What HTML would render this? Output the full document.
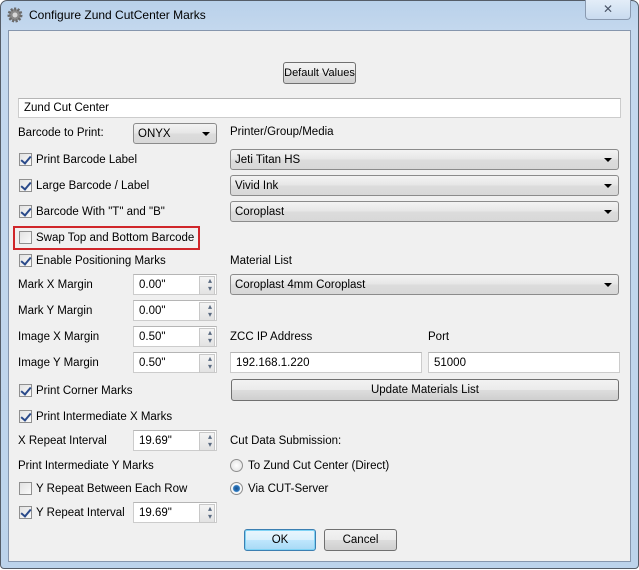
<!DOCTYPE html>
<html><head><meta charset="utf-8"><style>
*{box-sizing:border-box;margin:0;padding:0}
body{width:639px;height:570px;overflow:hidden;background:#fff;font-family:"Liberation Sans",Tahoma,sans-serif;font-size:11.5px;color:#000;position:relative}
.frame{position:absolute;left:0;top:0;width:639px;height:569px;border-radius:7px 7px 4px 4px;background:linear-gradient(#b9d1ea,#c4d8ee 30px,#bcd3eb);border:1px solid #555d68}
.client{position:absolute;left:8px;top:30px;width:623px;height:532px;background:#f0f0f0;border:1px solid #8696ad}
.a{position:absolute;white-space:nowrap}
.t{position:absolute;white-space:nowrap;line-height:14px;margin-top:1px}
.cb{position:absolute;width:13px;height:13px;border:1px solid #8f8f8f;background:linear-gradient(135deg,#e2e2e2,#fafafa)}
.cb.on::after{content:"";position:absolute;left:3px;top:0px;width:4px;height:8px;border:solid #2a4a8a;border-width:0 2px 2px 0;transform:rotate(40deg)}
.combo{position:absolute;height:21px;border:1px solid #8b8b8b;border-radius:3px;background:linear-gradient(#f3f3f3,#e6e6e6 50%,#dcdcdc 51%,#d8d8d8);padding:4px 0 0 4px;white-space:nowrap}
.combo::after{content:"";position:absolute;right:6px;top:8px;border:4px solid transparent;border-top:4px solid #000;border-bottom:0}
.inp{position:absolute;height:21px;border:1px solid #ccc;border-top-color:#b5b5b5;background:#fff;padding:4px 0 0 5px;white-space:nowrap}
.spin::after{content:"";position:absolute;right:1px;top:1px;width:14px;height:17px;border:1px solid #c8c8c8;background:linear-gradient(#f4f4f4,#e3e3e3)}
.spin::before{content:"▴\A▾";white-space:pre;position:absolute;right:4px;top:2px;font-size:8px;line-height:8px;color:#5a6a80;z-index:1}
.btn{position:absolute;height:22px;border:1px solid #707070;border-radius:3px;background:linear-gradient(#f2f2f2,#ebebeb 50%,#dddddd 51%,#cfcfcf);text-align:center;padding-top:4px;white-space:nowrap}
.radio{position:absolute;width:13px;height:13px;border-radius:50%;border:1px solid #8f8f8f;background:radial-gradient(#fff,#ddd)}
</style></head><body>
<div class="frame"></div>
<svg class="a" style="left:7px;top:7px" width="16" height="16" viewBox="0 0 16 16"><circle cx="8" cy="8" r="6" fill="#8a8a8a" stroke="#6a6a6a" stroke-dasharray="2 1.4" stroke-width="3"/><circle cx="8" cy="8" r="2.5" fill="#d8d8d8"/></svg>
<div class="a" style="left:29px;top:8px;font-size:12px;line-height:14px">Configure Zund CutCenter Marks</div>
<div class="a" style="left:585px;top:0;width:46px;height:20px;border:1px solid #8a9ab0;border-top:0;border-radius:0 0 4px 4px;background:linear-gradient(#e3edf8,#c9dbef);text-align:center;font-size:12px;color:#4a5568;line-height:18px">✕</div>
<div class="client"></div>

<div class="btn" style="left:283px;top:62px;width:73px;font-size:11px;padding-top:4px">Default Values</div>
<div class="inp" style="left:18px;top:98px;width:603px;height:20px;padding-top:3px">Zund Cut Center</div>

<div class="t" style="left:18px;top:125px">Barcode to Print:</div>
<div class="combo" style="left:133px;top:123px;width:84px">ONYX</div>
<div class="t" style="left:230px;top:124px">Printer/Group/Media</div>

<div class="cb on" style="left:19px;top:153px"></div><div class="t" style="left:36px;top:152px">Print Barcode Label</div>
<div class="combo" style="left:230px;top:149px;width:389px">Jeti Titan HS</div>
<div class="cb on" style="left:19px;top:179px"></div><div class="t" style="left:36px;top:178px">Large Barcode / Label</div>
<div class="combo" style="left:230px;top:175px;width:389px">Vivid Ink</div>
<div class="cb on" style="left:19px;top:205px"></div><div class="t" style="left:36px;top:204px">Barcode With "T" and "B"</div>
<div class="combo" style="left:230px;top:201px;width:389px">Coroplast</div>

<div class="a" style="left:13px;top:226px;width:187px;height:24px;border:2px solid #d0262a"></div>
<div class="cb" style="left:19px;top:231px"></div><div class="t" style="left:36px;top:230px">Swap Top and Bottom Barcode</div>

<div class="cb on" style="left:19px;top:254px"></div><div class="t" style="left:36px;top:253px">Enable Positioning Marks</div>
<div class="t" style="left:230px;top:253px">Material List</div>
<div class="combo" style="left:230px;top:274px;width:389px">Coroplast 4mm Coroplast</div>

<div class="t" style="left:18px;top:277px">Mark X Margin</div><div class="inp spin" style="left:133px;top:274px;width:84px">0.00"</div>
<div class="t" style="left:18px;top:303px">Mark Y Margin</div><div class="inp spin" style="left:133px;top:300px;width:84px">0.00"</div>
<div class="t" style="left:18px;top:329px">Image X Margin</div><div class="inp spin" style="left:133px;top:326px;width:84px">0.50"</div>
<div class="t" style="left:18px;top:355px">Image Y Margin</div><div class="inp spin" style="left:133px;top:352px;width:84px">0.50"</div>

<div class="t" style="left:230px;top:329px">ZCC IP Address</div>
<div class="t" style="left:428px;top:329px">Port</div>
<div class="inp" style="left:230px;top:352px;width:192px">192.168.1.220</div>
<div class="inp" style="left:428px;top:352px;width:192px">51000</div>

<div class="cb on" style="left:19px;top:384px"></div><div class="t" style="left:36px;top:383px">Print Corner Marks</div>
<div class="btn" style="left:231px;top:379px;width:388px">Update Materials List</div>
<div class="cb on" style="left:19px;top:410px"></div><div class="t" style="left:36px;top:409px">Print Intermediate X Marks</div>

<div class="t" style="left:18px;top:433px">X Repeat Interval</div><div class="inp spin" style="left:133px;top:430px;width:84px">19.69"</div>
<div class="t" style="left:230px;top:433px">Cut Data Submission:</div>
<div class="t" style="left:18px;top:458px">Print Intermediate Y Marks</div>
<div class="radio" style="left:230px;top:459px"></div><div class="t" style="left:248px;top:458px">To Zund Cut Center (Direct)</div>
<div class="cb" style="left:19px;top:482px"></div><div class="t" style="left:36px;top:481px">Y Repeat Between Each Row</div>
<div class="radio" style="left:230px;top:482px;background:radial-gradient(#1a4f8a 0,#2a78c0 3px,#fff 4px,#ddd)"></div><div class="t" style="left:248px;top:481px">Via CUT-Server</div>
<div class="cb on" style="left:19px;top:506px"></div><div class="t" style="left:36px;top:505px">Y Repeat Interval</div>
<div class="inp spin" style="left:133px;top:502px;width:84px">19.69"</div>

<div class="btn" style="left:244px;top:529px;width:72px;border-color:#3c7fb1;box-shadow:inset 0 0 0 1px #7fd3f5;background:linear-gradient(#eaf6fd,#d9f0fc 50%,#bee6fd 51%,#a7d9f5)">OK</div>
<div class="btn" style="left:324px;top:529px;width:73px">Cancel</div>
</body></html>
